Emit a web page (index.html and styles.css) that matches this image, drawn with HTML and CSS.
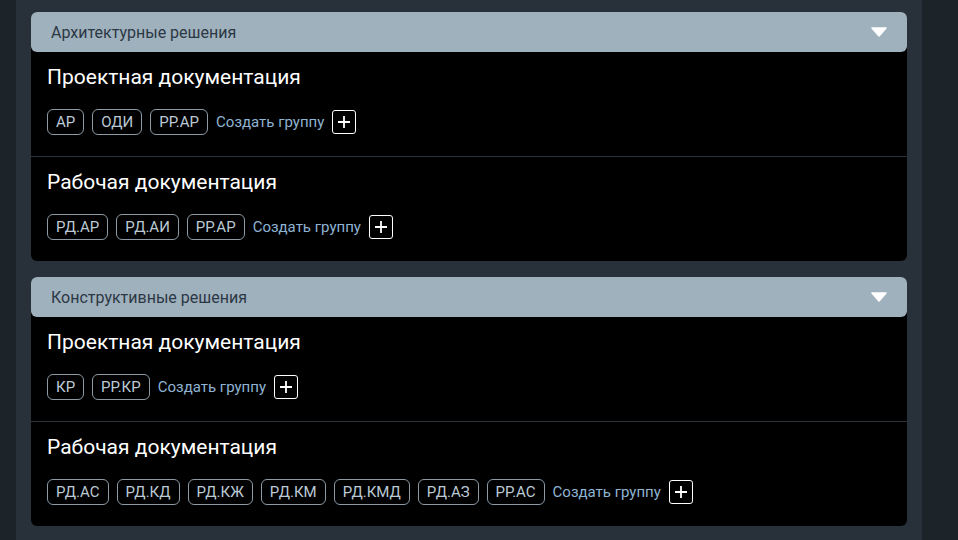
FILE: index.html
```html
<!DOCTYPE html>
<html lang="ru">
<head>
<meta charset="utf-8">
<link rel="stylesheet" href="styles.css">
</head>
<body>
<div class="page">
  <div class="panel">
    <div class="card">
      <div class="card-header">
        <span class="card-title">Архитектурные решения</span>
        <svg class="caret" width="16" height="10" viewBox="0 0 16 10"><path d="M1 1 H15 L8 9 Z" fill="#fff" stroke="#fff" stroke-linejoin="round" stroke-width="1.5"/></svg>
      </div>
      <div class="section">
        <div class="section-title">Проектная документация</div>
        <div class="tags">
          <span class="tag">АР</span>
          <span class="tag">ОДИ</span>
          <span class="tag">РР.АР</span>
          <span class="create">Создать группу</span>
          <span class="add"><svg width="14" height="14" viewBox="0 0 14 14"><path d="M7 1 V13 M1 7 H13" stroke="#fff" stroke-width="1.8"/></svg></span>
        </div>
      </div>
      <div class="section">
        <div class="section-title">Рабочая документация</div>
        <div class="tags">
          <span class="tag">РД.АР</span>
          <span class="tag">РД.АИ</span>
          <span class="tag">РР.АР</span>
          <span class="create">Создать группу</span>
          <span class="add"><svg width="14" height="14" viewBox="0 0 14 14"><path d="M7 1 V13 M1 7 H13" stroke="#fff" stroke-width="1.8"/></svg></span>
        </div>
      </div>
    </div>
    <div class="card">
      <div class="card-header">
        <span class="card-title">Конструктивные решения</span>
        <svg class="caret" width="16" height="10" viewBox="0 0 16 10"><path d="M1 1 H15 L8 9 Z" fill="#fff" stroke="#fff" stroke-linejoin="round" stroke-width="1.5"/></svg>
      </div>
      <div class="section">
        <div class="section-title">Проектная документация</div>
        <div class="tags">
          <span class="tag">КР</span>
          <span class="tag">РР.КР</span>
          <span class="create">Создать группу</span>
          <span class="add"><svg width="14" height="14" viewBox="0 0 14 14"><path d="M7 1 V13 M1 7 H13" stroke="#fff" stroke-width="1.8"/></svg></span>
        </div>
      </div>
      <div class="section">
        <div class="section-title">Рабочая документация</div>
        <div class="tags">
          <span class="tag">РД.АС</span>
          <span class="tag">РД.КД</span>
          <span class="tag">РД.КЖ</span>
          <span class="tag">РД.КМ</span>
          <span class="tag">РД.КМД</span>
          <span class="tag">РД.АЗ</span>
          <span class="tag">РР.АС</span>
          <span class="create">Создать группу</span>
          <span class="add"><svg width="14" height="14" viewBox="0 0 14 14"><path d="M7 1 V13 M1 7 H13" stroke="#fff" stroke-width="1.8"/></svg></span>
        </div>
      </div>
    </div>
  </div>
</div>
</body>
</html>
```

FILE: styles.css
```css
* { box-sizing: border-box; }
html, body { margin: 0; padding: 0; }
body {
  background: #1c2329;
  font-family: Roboto, "Liberation Sans", sans-serif;
  width: 958px;
  height: 540px;
  overflow: hidden;
}
.page {
  display: flex;
  height: 540px;
  padding-left: 16px;
  padding-right: 36px;
}
.panel {
  flex: 1;
  background: #28313a;
  padding: 12px 15px 0;
  display: flex;
  flex-direction: column;
  gap: 16px;
}
.card {
  background: #000;
  border-radius: 6px;
}
.card-header {
  height: 40px;
  background: #a0b1be;
  border-radius: 6px;
  display: flex;
  align-items: center;
  justify-content: space-between;
  padding: 0 20px;
}
.card-title {
  font-size: 16px;
  color: #2b3844;
}
.caret { display: block; }
.section {
  padding: 13px 16px 21px;
}
.section + .section {
  border-top: 1px solid #2b333b;
}
.section-title {
  font-size: 21px;
  line-height: 24px;
  color: #fff;
  margin-bottom: 20px;
}
.tags {
  display: flex;
  align-items: center;
  gap: 8px;
}
.tag {
  height: 26px;
  display: inline-flex;
  align-items: center;
  padding: 0 8px;
  border: 1px solid #8d9ba7;
  border-radius: 6px;
  color: #bccad6;
  font-size: 15px;
}
.create {
  color: #8fb4d3;
  font-size: 15px;
}
.add {
  width: 24px;
  height: 24px;
  border: 1.5px solid #fff;
  border-radius: 3px;
  display: inline-flex;
  align-items: center;
  justify-content: center;
}
.add svg { display: block; }
```
